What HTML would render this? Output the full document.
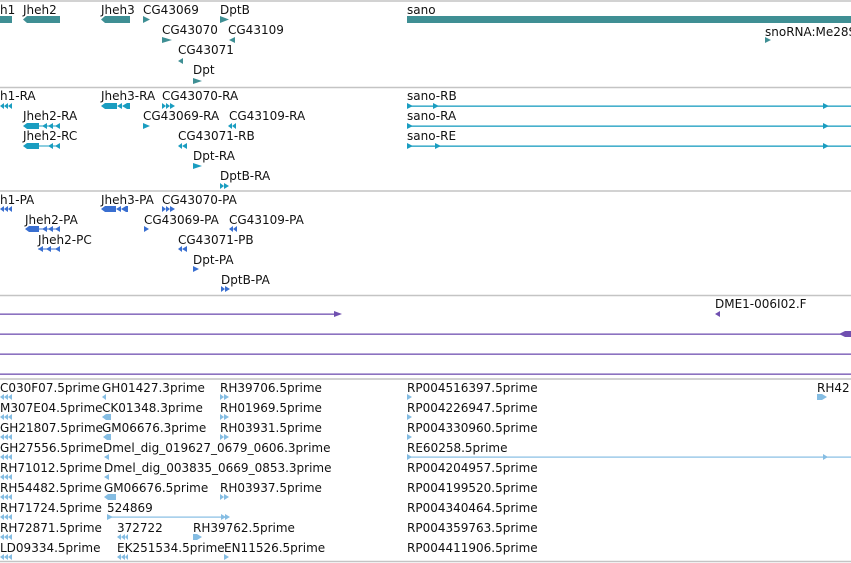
<!DOCTYPE html>
<html><head><meta charset="utf-8"><style>
html,body{margin:0;padding:0;background:#fff;}
svg{display:block;}
text{font-family:"DejaVu Sans","Liberation Sans",sans-serif;font-size:12px;fill:#111;}
</style></head><body>
<svg width="851" height="563" viewBox="0 0 851 563" xmlns="http://www.w3.org/2000/svg">
<g stroke="#c4c4c4" stroke-width="1.5">
<line x1="0" y1="1" x2="851" y2="1"/>
<line x1="0" y1="87.5" x2="851" y2="87.5"/>
<line x1="0" y1="191" x2="851" y2="191"/>
<line x1="0" y1="295.5" x2="851" y2="295.5"/>
<line x1="0" y1="379" x2="851" y2="379"/>
<line x1="0" y1="561.5" x2="851" y2="561.5"/>
</g>
<g fill="#3f8f94">
<rect x="0" y="16" width="12" height="7"/>
<polygon points="23,19.5 27,16 60,16 60,23 27,23"/>
<polygon points="101,19.5 105,16 130,16 130,23 105,23"/>
<polygon points="143,16 150,19.5 143,23"/>
<polygon points="220,16 229,19.5 220,23"/>
<rect x="407" y="16" width="444" height="7"/>
<polygon points="162,37 172,40 162,43"/>
<polygon points="235,37 229,40 235,43"/>
<polygon points="183,58 178,61 183,64"/>
<polygon points="193,78 202,81 193,84"/>
<polygon points="765,37 771,40 765,43"/>
</g>
<g transform="translate(0,1)">
<text x="0" y="13">h1</text><text x="23" y="13">Jheh2</text><text x="101" y="13">Jheh3</text>
<text x="143" y="13">CG43069</text><text x="220" y="13">DptB</text><text x="407" y="13">sano</text>
<text x="162" y="33">CG43070</text><text x="228" y="33">CG43109</text><text x="765" y="35">snoRNA:Me28S</text>
<text x="178" y="53">CG43071</text><text x="193" y="73">Dpt</text>
</g>
<g fill="#1a9dc0">
<polygon points="0,106 4,103 4,109"/><polygon points="4,106 8,103 8,109"/><polygon points="8,106 12,103 12,109"/>
<polygon points="101,106 105,103 117,103 117,109 105,109"/><polygon points="117,106 122,103 122,109"/><polygon points="122,106 127,103 130,103 130,109 127,109"/>
<polygon points="162,103 166,106 162,109"/><polygon points="166,103 170,106 166,109"/><polygon points="170,103 175,106 170,109"/>
<polygon points="23,126 27,123 39,123 39,129 27,129"/><rect x="39" y="125.5" width="21" height="1"/><polygon points="42,126 47,123 47,129"/><polygon points="48,126 53,123 53,129"/><polygon points="55,126 60,123 60,129"/>
<polygon points="143,123 150,126 143,129"/>
<polygon points="228,126 232,123 232,129"/><polygon points="232,126 236,123 236,129"/>
<polygon points="23,146 27,143 39,143 39,149 27,149"/><rect x="39" y="145.5" width="21" height="1"/><polygon points="48,146 53,143 53,149"/><polygon points="55,146 60,143 60,149"/>
<polygon points="178,146 182,143 182,149"/><polygon points="182,146 187,143 187,149"/>
<polygon points="193,163 202,166 193,169"/>
<polygon points="220,183 224,186 220,189"/><polygon points="224,183 229,186 224,189"/>
<rect x="407" y="105.5" width="444" height="1.3"/><rect x="407" y="125.5" width="444" height="1.3"/><rect x="407" y="145.5" width="444" height="1.3"/>
<polygon points="407,103 413,106 407,109"/><polygon points="433,103 439,106 433,109"/><polygon points="823,103 829,106 823,109"/>
<polygon points="407,123 413,126 407,129"/><polygon points="823,123 829,126 823,129"/>
<polygon points="407,143 413,146 407,149"/><polygon points="435,143 441,146 435,149"/><polygon points="823,143 829,146 823,149"/>
</g>
<g transform="translate(0,1)">
<text x="0" y="99">h1-RA</text><text x="101" y="99">Jheh3-RA</text><text x="162" y="99">CG43070-RA</text><text x="407" y="99">sano-RB</text>
<text x="23" y="119">Jheh2-RA</text><text x="143" y="119">CG43069-RA</text><text x="229" y="119">CG43109-RA</text><text x="407" y="119">sano-RA</text>
<text x="23" y="139">Jheh2-RC</text><text x="178" y="139">CG43071-RB</text><text x="407" y="139">sano-RE</text>
<text x="193" y="159">Dpt-RA</text><text x="220" y="179">DptB-RA</text>
</g>
<g fill="#3a6fd0">
<polygon points="0,209 4,206 4,212"/><polygon points="4,209 8,206 8,212"/><polygon points="8,209 12,206 12,212"/>
<polygon points="101,209 105,206 116,206 116,212 105,212"/><polygon points="116,209 121,206 121,212"/><polygon points="121,209 126,206 128,206 128,212 126,212"/>
<polygon points="162,206 166,209 162,212"/><polygon points="166,206 170,209 166,212"/><polygon points="170,206 175,209 170,212"/>
<polygon points="25,229 29,226 39,226 39,232 29,232"/><rect x="39" y="228.5" width="21" height="1"/><polygon points="42,229 47,226 47,232"/><polygon points="48,229 53,226 53,232"/><polygon points="55,229 60,226 60,232"/>
<polygon points="144,226 149,229 144,232"/>
<polygon points="229,229 233,226 233,232"/><polygon points="233,229 237,226 237,232"/>
<rect x="38" y="248.5" width="22" height="1"/><polygon points="38,249 43,246 43,252"/><polygon points="46,249 51,246 51,252"/><polygon points="55,249 60,246 60,252"/>
<polygon points="178,249 182,246 182,252"/><polygon points="182,249 187,246 187,252"/>
<polygon points="193,266 199,269 193,272"/>
<polygon points="221,286 225,289 221,292"/><polygon points="225,286 230,289 225,292"/>
</g>
<g transform="translate(0,1)">
<text x="0" y="203">h1-PA</text><text x="101" y="203">Jheh3-PA</text><text x="162" y="203">CG43070-PA</text>
<text x="25" y="223">Jheh2-PA</text><text x="144" y="223">CG43069-PA</text><text x="229" y="223">CG43109-PA</text>
<text x="38" y="243">Jheh2-PC</text><text x="178" y="243">CG43071-PB</text>
<text x="193" y="263">Dpt-PA</text><text x="221" y="283">DptB-PA</text>
</g>
<g fill="#7050b0">
<rect x="0" y="313.5" width="338" height="1.3"/><polygon points="334,311 342,314 334,317"/>
<polygon points="715,314 720,311 720,317"/>
<rect x="0" y="333.5" width="851" height="1.3"/><polygon points="839,334 845,331 851,331 851,337 845,337"/>
<rect x="0" y="353.5" width="851" height="1.3"/>
<rect x="0" y="373.5" width="851" height="1.3"/>
</g>
<text x="715" y="308">DME1-006I02.F</text>
<g fill="#85bde3">
<polygon points="0,397 4,394 4,400"/><polygon points="4,397 8,394 8,400"/><polygon points="8,397 12,394 12,400"/>
<polygon points="0,417 4,414 4,420"/><polygon points="4,417 8,414 8,420"/><polygon points="8,417 12,414 12,420"/>
<polygon points="0,437 4,434 4,440"/><polygon points="4,437 8,434 8,440"/><polygon points="8,437 12,434 12,440"/>
<polygon points="0,457 4,454 4,460"/><polygon points="4,457 8,454 8,460"/><polygon points="8,457 12,454 12,460"/>
<polygon points="0,477 4,474 4,480"/><polygon points="4,477 8,474 8,480"/><polygon points="8,477 12,474 12,480"/>
<polygon points="0,497 4,494 4,500"/><polygon points="4,497 8,494 8,500"/><polygon points="8,497 12,494 12,500"/>
<polygon points="0,517 4,514 4,520"/><polygon points="4,517 8,514 8,520"/><polygon points="8,517 12,514 12,520"/>
<polygon points="0,537 4,534 4,540"/><polygon points="4,537 8,534 8,540"/><polygon points="8,537 12,534 12,540"/>
<polygon points="0,557 4,554 4,560"/><polygon points="4,557 8,554 8,560"/><polygon points="8,557 12,554 12,560"/>
<polygon points="102,397 106,394 106,400"/>
<polygon points="102,417 106,414 111,414 111,420 106,420"/>
<polygon points="103,437 107,434 111,434 111,440 107,440"/>
<polygon points="104,457 109,454 109,460"/>
<polygon points="104,477 109,474 109,480"/>
<polygon points="104,497 108,494 116,494 116,500 108,500"/>
<polygon points="107,514 113,517 107,520"/><rect x="107" y="516.5" width="120" height="1.2"/><polygon points="221,514 226,517 221,520"/><polygon points="225,514 230,517 225,520"/>
<polygon points="117,537 121,534 121,540"/><polygon points="121,537 125,534 125,540"/><polygon points="125,537 128,534 128,540"/>
<polygon points="117,557 121,554 121,560"/><polygon points="121,557 125,554 125,560"/><polygon points="125,557 128,554 128,560"/>
<polygon points="220,394 224,397 220,400"/><polygon points="224,394 229,397 224,400"/>
<polygon points="220,414 224,417 220,420"/><polygon points="224,414 229,417 224,420"/>
<polygon points="220,434 224,437 220,440"/><polygon points="224,434 229,437 224,440"/>
<polygon points="220,494 224,497 220,500"/><polygon points="224,494 229,497 224,500"/>
<polygon points="193,534 197,534 202,537 197,540 193,540"/>
<polygon points="224,554 229,557 224,560"/>
<polygon points="407,394 412,397 407,400"/>
<polygon points="407,414 412,417 407,420"/>
<polygon points="407,434 412,437 407,440"/>
<rect x="407" y="456.5" width="444" height="1.2"/><polygon points="407,454 412,457 407,460"/><polygon points="823,454 828,457 823,460"/>
<polygon points="817,394 822,394 827,397 822,400 817,400"/>
</g>
<g transform="translate(0,1)">
<text x="0" y="391">C030F07.5prime</text><text x="102" y="391">GH01427.3prime</text><text x="220" y="391">RH39706.5prime</text><text x="407" y="391">RP004516397.5prime</text><text x="817" y="391">RH42</text>
<text x="0" y="411">M307E04.5prime</text><text x="102" y="411">CK01348.3prime</text><text x="220" y="411">RH01969.5prime</text><text x="407" y="411">RP004226947.5prime</text>
<text x="0" y="431">GH21807.5prime</text><text x="102" y="431">GM06676.3prime</text><text x="220" y="431">RH03931.5prime</text><text x="407" y="431">RP004330960.5prime</text>
<text x="0" y="451">GH27556.5prime</text><text x="103" y="451">Dmel_dig_019627_0679_0606.3prime</text><text x="407" y="451">RE60258.5prime</text>
<text x="0" y="471">RH71012.5prime</text><text x="104" y="471">Dmel_dig_003835_0669_0853.3prime</text><text x="407" y="471">RP004204957.5prime</text>
<text x="0" y="491">RH54482.5prime</text><text x="104" y="491">GM06676.5prime</text><text x="220" y="491">RH03937.5prime</text><text x="407" y="491">RP004199520.5prime</text>
<text x="0" y="511">RH71724.5prime</text><text x="107" y="511">524869</text><text x="407" y="511">RP004340464.5prime</text>
<text x="0" y="531">RH72871.5prime</text><text x="117" y="531">372722</text><text x="193" y="531">RH39762.5prime</text><text x="407" y="531">RP004359763.5prime</text>
<text x="0" y="551">LD09334.5prime</text><text x="117" y="551">EK251534.5prime</text><text x="224" y="551">EN11526.5prime</text><text x="407" y="551">RP004411906.5prime</text>
</g>
</svg>
</body></html>
